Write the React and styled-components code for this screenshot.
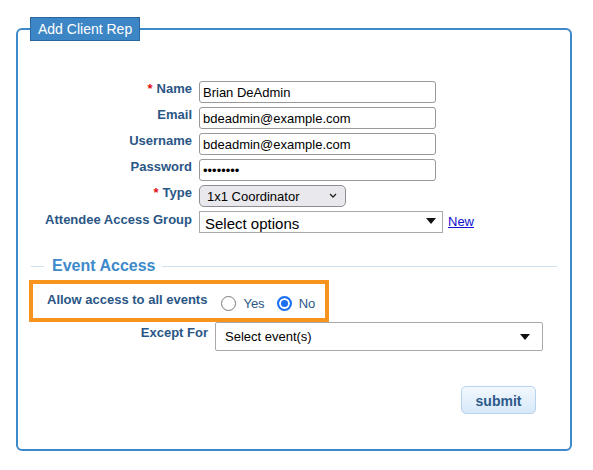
import React from 'react'
import styled, { createGlobalStyle } from 'styled-components'

const GlobalStyle = createGlobalStyle`
  body {
    margin: 0;
    background: #fff;
    font-family: "Liberation Sans", Arial, sans-serif;
  }
`

const Page = styled.div`
  padding: 17px 0 0 16px;
`

const Panel = styled.fieldset`
  box-sizing: border-box;
  width: 556px;
  margin: 0;
  padding: 0;
  border: 2px solid #3d89c9;
  border-radius: 6px;
  min-inline-size: 0;
`

const PanelTitle = styled.legend`
  margin-left: 12px;
  padding: 3px 7px;
  background: #3d86c5;
  border: 1px solid #2a679f;
  color: #fff;
  font-size: 14px;
  line-height: 16px;
`

const Body = styled.div`
  padding: 40px 13px 35px 9px;
`

const FormGrid = styled.div`
  display: grid;
  grid-template-columns: 165px auto;
  column-gap: 7px;
  row-gap: 4px;
  align-items: start;
`

const Label = styled.label`
  display: block;
  width: ${p => p.$width || 'auto'};
  text-align: right;
  font-size: 13px;
  line-height: 15px;
  font-weight: bold;
  color: #2a5686;
  white-space: nowrap;
  padding-top: ${p => p.$top || 0}px;
`

const Required = styled.span`
  color: #e01010;
  margin-right: 4px;
`

const Field = styled.div`
  display: flex;
  align-items: center;
`

const TextInput = styled.input`
  box-sizing: border-box;
  width: 237px;
  height: 22px;
  margin: 0;
  padding: 0 3px;
  border: 1px solid #999;
  border-radius: 3px;
  font-family: "Liberation Sans", Arial, sans-serif;
  font-size: 13px;
  color: #000;
  outline: none;
`

const NativeSelect = styled.select`
  appearance: none;
  box-sizing: border-box;
  width: 147px;
  height: 22px;
  margin: 0;
  padding: 0 7px;
  border: 1px solid #8d8d93;
  border-radius: 5px;
  background: #e9e9ed;
  font-family: "Liberation Sans", Arial, sans-serif;
  font-size: 13px;
  color: #000;
`

const SelectWrap = styled.div`
  position: relative;
  display: inline-flex;
`

const Chevron = styled.svg`
  position: absolute;
  right: 9px;
  top: 8px;
  pointer-events: none;
`

const Dropdown = styled.button`
  box-sizing: border-box;
  display: flex;
  align-items: center;
  justify-content: space-between;
  width: ${p => p.$width}px;
  height: ${p => p.$height}px;
  margin: 0;
  padding: ${p => p.$pad};
  border: 1px solid #a9a9a9;
  border-radius: ${p => p.$radius || 0}px;
  background: #fff;
  font-family: "Liberation Sans", Arial, sans-serif;
  font-size: ${p => p.$size}px;
  color: #000;
  text-align: left;
  cursor: pointer;
`

const DropdownText = styled.span`
  padding-top: ${p => p.$top || 0}px;
`

const Caret = styled.span`
  width: 0;
  height: 0;
  border-left: 5px solid transparent;
  border-right: 5px solid transparent;
  border-top: 6px solid #111;
  margin-top: ${p => p.$top || 0}px;
`

const NewLink = styled.a`
  margin-left: 5px;
  font-size: 13px;
  color: #1010d0;
  text-decoration: underline;
  align-self: flex-start;
  padding-top: 3px;
`

const SectionHeader = styled.div`
  display: flex;
  align-items: center;
  height: 18px;
  margin-top: 24px;
`

const Rule = styled.div`
  height: 1px;
  background: #cfe1ec;
  width: ${p => (p.$grow ? 'auto' : '13px')};
  flex: ${p => (p.$grow ? 1 : 'none')};
  margin-left: ${p => (p.$grow ? 0 : 4)}px;
`

const SectionTitle = styled.span`
  padding: 0 7px 0 8px;
  font-size: 16px;
  line-height: 18px;
  font-weight: bold;
  color: #3d8acb;
`

const Highlight = styled.div`
  box-sizing: border-box;
  display: flex;
  align-items: flex-start;
  width: 300px;
  height: 42px;
  margin: 5px 0 0 2px;
  padding: 8px 11px 0 14px;
  border: 4px solid #f7941d;
`

const RadioGroup = styled.div`
  display: flex;
  align-items: center;
  gap: 12px;
  margin: 3px 0 0 14px;
`

const RadioOption = styled.label`
  display: flex;
  align-items: center;
  gap: 7px;
  font-size: 13px;
  line-height: 15px;
  padding-top: 1px;
  color: #2a5686;
`

const Radio = styled.input.attrs({ type: 'radio' })`
  appearance: none;
  box-sizing: border-box;
  width: 15px;
  height: 15px;
  margin: 0;
  border: 1px solid #7a7a7a;
  border-radius: 50%;
  background: #fff;

  &:checked {
    border: 2px solid #1a6ff2;
    background: #1a6ff2;
    box-shadow: inset 0 0 0 2px #fff;
  }
`

const ExceptRow = styled.div`
  display: flex;
  align-items: flex-start;
  gap: 7px;
`

const Actions = styled.div`
  display: flex;
  justify-content: flex-end;
  padding-right: 21px;
  margin-top: 35px;
`

const SubmitButton = styled.button`
  box-sizing: border-box;
  width: 75px;
  height: 28px;
  margin: 0;
  padding: 2px 0 0;
  border: 1px solid #b7d3ee;
  border-radius: 5px;
  background: linear-gradient(#f2f8fe, #d8e8f9);
  font-family: "Liberation Sans", Arial, sans-serif;
  font-size: 14px;
  font-weight: bold;
  color: #2b5a8a;
  cursor: pointer;
`

const App = () => {
  return (
    <Page>
      <GlobalStyle />
      <Panel>
        <PanelTitle>Add Client Rep</PanelTitle>
        <Body>
          <FormGrid>
            <Label><Required>*</Required>Name</Label>
            <Field><TextInput defaultValue="Brian DeAdmin" /></Field>

            <Label>Email</Label>
            <Field><TextInput defaultValue="bdeadmin@example.com" /></Field>

            <Label>Username</Label>
            <Field><TextInput defaultValue="bdeadmin@example.com" /></Field>

            <Label>Password</Label>
            <Field><TextInput type="password" defaultValue="password" /></Field>

            <Label><Required>*</Required>Type</Label>
            <Field>
              <SelectWrap>
                <NativeSelect defaultValue="1x1">
                  <option value="1x1">1x1 Coordinator</option>
                  <option value="admin">Administrator</option>
                </NativeSelect>
                <Chevron width="8" height="5" viewBox="0 0 8 5">
                  <polyline points="1,1 4,4 7,1" fill="none" stroke="#222" strokeWidth="1.3" />
                </Chevron>
              </SelectWrap>
            </Field>

            <Label $top={1}>Attendee Access Group</Label>
            <Field>
              <Dropdown $width={244} $height={22} $size={15} $pad="0 6px 0 5px">
                <DropdownText $top={2}>Select options</DropdownText>
                <Caret $top={-3} />
              </Dropdown>
              <NewLink href="#">New</NewLink>
            </Field>
          </FormGrid>

          <SectionHeader>
            <Rule />
            <SectionTitle>Event Access</SectionTitle>
            <Rule $grow />
          </SectionHeader>

          <Highlight>
            <Label>Allow access to all events</Label>
            <RadioGroup>
              <RadioOption><Radio name="allEvents" />Yes</RadioOption>
              <RadioOption><Radio name="allEvents" defaultChecked />No</RadioOption>
            </RadioGroup>
          </Highlight>

          <ExceptRow>
            <Label $width="181px" $top={3}>Except For</Label>
            <Dropdown $width={328} $height={29} $size={13} $radius={2} $pad="0 12px 0 9px">
              <span>Select event(s)</span>
              <Caret />
            </Dropdown>
          </ExceptRow>

          <Actions>
            <SubmitButton>submit</SubmitButton>
          </Actions>
        </Body>
      </Panel>
    </Page>
  )
}

export default App
